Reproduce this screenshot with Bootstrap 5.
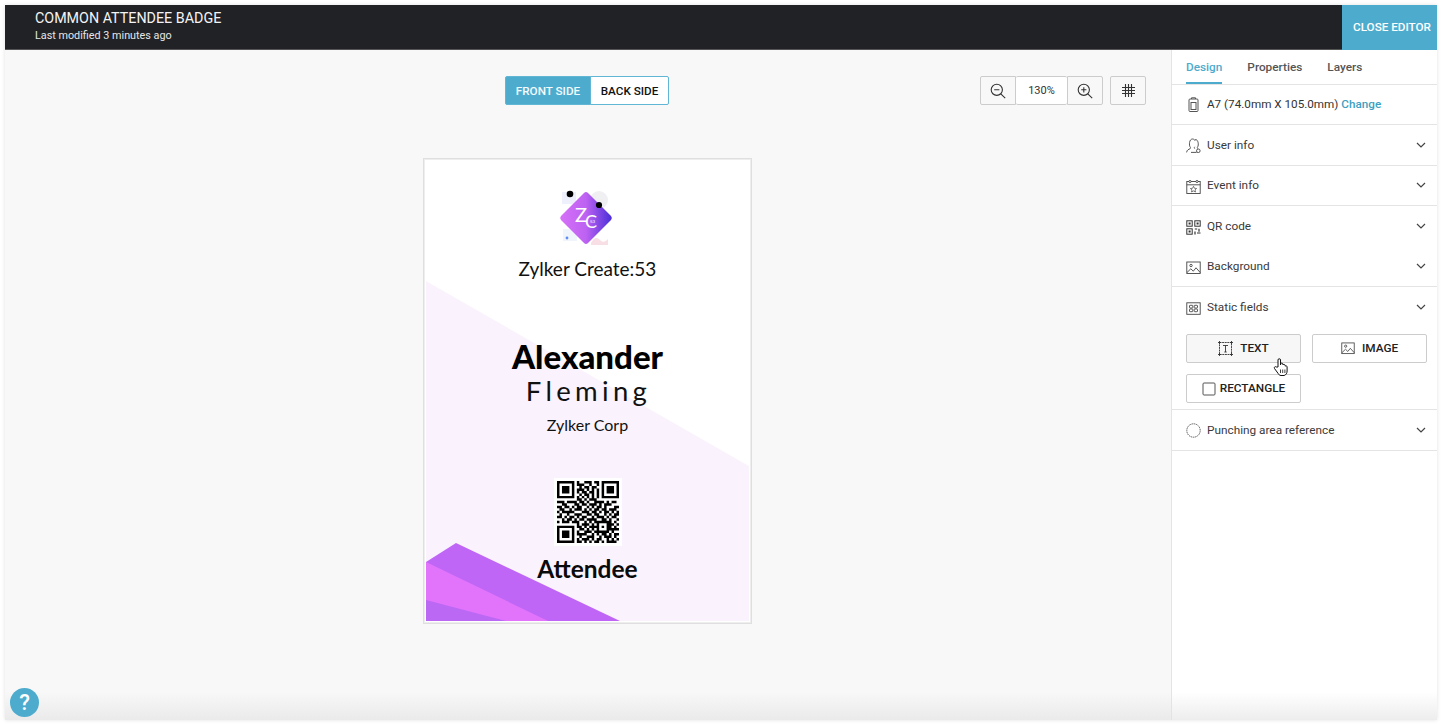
<!DOCTYPE html>
<html>
<head>
  <meta charset="utf-8" />
  <title>Common attendee badge</title>
  <link href="https://cdn.jsdelivr.net/npm/bootstrap@5.3.2/dist/css/bootstrap.min.css" rel="stylesheet">
  <style>
    html, body { height: 100%; overflow: hidden; }
    body { background: #fff; padding: 5px 5px 5px 5px; font-family: Roboto, "Liberation Sans", sans-serif; font-size: 12px; color: #333; }
    .editor-frame { position: relative; height: 715px; display: flex; flex-direction: column; box-shadow: 0 0 4px rgba(0,0,0,.12); overflow: hidden; }
    .top-bar { height: 45px; flex: none; background: #212226; color: #fff; border-bottom: 1px solid #555; }
    .top-title { padding: 4px 0 0 30px; }
    .top-title h1 { font-size: 14.3px; font-weight: 400; margin: 0; line-height: 18px; color: #f4f4f4; }
    .top-title p { font-size: 10.8px; margin: 2px 0 0; line-height: 14px; color: #e6e6e6; }
    .close-editor { width: 95px; height: 45px; border: 0; border-radius: 0; background: #4dabcd; color: #fff; font-size: 11.7px; font-weight: 500; padding: 0 0 0 5px; white-space: nowrap; }
    .work-area { flex: 1; min-height: 0; }
    .canvas-pane { flex: 1; background: #f8f8f8; padding-top: 26px; position: relative; min-width: 0; }
    .canvas-tools { height: 29px; position: relative; }
    .side-toggle { margin-left: 500px; }
    .side-toggle .btn { height: 29px; font-size: 11.7px; font-weight: 500; padding: 2px 0 0; border-color: #62b6d5; border-radius: 2px; }
    .side-toggle .btn-on { width: 86px; background: #4dabcd; color: #f4fbfd; }
    .side-toggle .btn-off { width: 79px; background: #fff; color: #111; }
    .zoom-tools { position: absolute; left: 975px; top: 0; }
    .tool-btn { height: 29px; border: 1px solid #ccc; background: #f8f8f8; padding: 0; display: flex; align-items: center; justify-content: center; border-radius: 2px; }
    .zoom-out { width: 36px; border-radius: 2px 0 0 2px; }
    .zoom-val { width: 51px; border-width: 1px 0; background: #fff; font-size: 11px; color: #333; padding-top: 1px; }
    .zoom-in { width: 36px; border-radius: 0 2px 2px 0; }
    .grid-btn { width: 36px; margin-left: 7px; }
    .id-badge { position: relative; width: 329px; height: 466px; margin: 53px 0 0 418px; background: #fff; border: 1px solid #dfdfdf; outline: 1px solid #eee; outline-offset: -2px; text-align: center; color: #000; font-family: Lato, "Liberation Sans", sans-serif; }
    .badge-art { position: absolute; left: 2px; top: 2px; width: 323px; height: 460px; }
    .badge-flow { position: relative; display: flex; flex-direction: column; align-items: center; }
    .badge-logo { width: 60px; height: 64px; margin: 26px 0 0 -2px; display: block; }
    .event-name { font-size: 19px; line-height: 24px; margin-top: 8px; color: #111; }
    .first-name { font-size: 33px; font-weight: 900; line-height: 36px; margin-top: 57px; }
    .last-name { font-size: 27.5px; line-height: 32px; letter-spacing: 4.3px; margin: 1px 0 0 2px; color: #111; }
    .org-name { font-size: 16px; line-height: 20px; margin-top: 8px; color: #111; }
    .qr-box { width: 68px; height: 68px; margin-top: 43px; background: #fff; padding: 3px; display: block; }
    .role-name { font-size: 24.5px; font-weight: 700; line-height: 30px; margin-top: 8px; color: #0a0a0a; }
    .help-dot { position: absolute; left: 5px; top: 683px; width: 29px; height: 29px; border-radius: 50%; background: #4dabcd; color: #fff; font-size: 22px; font-weight: 500; line-height: 29px; text-align: center; z-index: 3; }
    .bottom-fade { position: absolute; left: 0; right: 0; bottom: 0; height: 28px; background: linear-gradient(to bottom, rgba(225,225,225,0), rgba(225,225,225,.6)); z-index: 2; pointer-events: none; }
    .side-pane { width: 266px; flex: none; background: #fff; border-left: 1px solid #e4e4e4; }
    .side-tabs { height: 35px; border-bottom: 1px solid #e4e4e4; padding-left: 14px; gap: 25px; }
    .side-tabs .nav-link { padding: 9px 0 0; height: 34px; font-size: 11.8px; font-weight: 500; color: #555; border-bottom: 2px solid transparent; }
    .side-tabs .nav-link.active { color: #4dabcd; border-bottom-color: #4dabcd; }
    .size-row { height: 40px; padding-left: 14px; border-bottom: 1px solid #e4e4e4; font-size: 11.7px; color: #333; gap: 6px; }
    .size-row a { color: #3d9fc2; font-weight: 500; text-decoration: none; }
    .prop-row { height: 40.5px; padding: 0 11px 0 14px; gap: 6px; color: #3a3a3a; font-size: 11.8px; }
    .prop-row svg.row-icon { width: 15px; height: 15px; flex: none; margin-top: 2px; }
    .prop-row.punch-row { height: 41px; }
    .row-rule { border-bottom: 1px solid #e4e4e4; }
    .prop-row span { flex: 1; padding-top: 2px; }
    .field-btns { display: grid; grid-template-columns: 115px 115px; column-gap: 11px; row-gap: 11px; padding: 6px 0 6px 14px; border-bottom: 1px solid #e4e4e4; }
    .field-btn { height: 29px; padding: 1px 0 0; font-size: 11.8px; font-weight: 500; color: #222; background: #fff; border: 1px solid #ccc; border-radius: 2px; display: flex; align-items: center; justify-content: center; gap: 7px; }
    .field-btn.is-hover { background: #f7f7f7; position: relative; }
    .hand-cursor { position: absolute; left: 86px; top: 22px; width: 16px; height: 20px; }
  </style>
</head>
<body>
  <div class="editor-frame">
    <!-- top bar -->
    <div class="top-bar d-flex justify-content-between">
      <div class="top-title">
        <h1>COMMON ATTENDEE BADGE</h1>
        <p>Last modified 3 minutes ago</p>
      </div>
      <button class="btn close-editor" type="button">CLOSE EDITOR</button>
    </div>

    <div class="work-area d-flex">
      <!-- canvas -->
      <div class="canvas-pane">
        <div class="canvas-tools">
          <div class="btn-group side-toggle" role="group">
            <button type="button" class="btn btn-on">FRONT SIDE</button>
            <button type="button" class="btn btn-off">BACK SIDE</button>
          </div>
          <div class="zoom-tools d-flex">
            <div class="tool-btn zoom-out">
              <svg width="16" height="16" viewBox="0 0 16 16" fill="none" stroke="#333" stroke-width="1.1"><circle cx="6.8" cy="6.8" r="5.6"/><path d="M4.2 6.8h5.2M10.8 10.8l4.4 4.4"/></svg>
            </div>
            <div class="tool-btn zoom-val">130%</div>
            <div class="tool-btn zoom-in">
              <svg width="16" height="16" viewBox="0 0 16 16" fill="none" stroke="#333" stroke-width="1.1"><circle cx="6.8" cy="6.8" r="5.6"/><path d="M4.2 6.8h5.2M6.8 4.2v5.2M10.8 10.8l4.4 4.4"/></svg>
            </div>
            <div class="tool-btn grid-btn">
              <svg width="15" height="15" viewBox="0 0 15 15" fill="none" stroke="#333" stroke-width="1.1"><path d="M4.5 1v13M7.5 1v13M10.5 1v13M1 4.5h13M1 7.5h13M1 10.5h13"/></svg>
            </div>
          </div>
        </div>

        <!-- badge preview -->
        <div class="id-badge">
          <svg class="badge-art" viewBox="0 0 323 460">
            <polygon points="0,120 323,305 323,460 0,460" fill="#faf3fe"/>
            <polygon points="0,401 30,382 194,460 0,460" fill="#bf66f7"/>
            <polygon points="0,401 122,460 0,460" fill="#e274fb"/>
            <polygon points="0,439 80,460 0,460" fill="#bb68f5"/>
          </svg>
          <div class="badge-flow">
            <svg class="badge-logo" viewBox="0 0 60 64">
              <defs>
                <linearGradient id="logoFill" x1="0" y1="0" x2="1" y2="0">
                  <stop offset="0" stop-color="#d670f7"/>
                  <stop offset=".5" stop-color="#bd62f2"/>
                  <stop offset="1" stop-color="#4a2ed8"/>
                </linearGradient>
              </defs>
              <rect x="5" y="7" width="14" height="12" fill="#eef0fb"/>
              <circle cx="42" cy="15" r="9" fill="#f0f0f3"/>
              <rect x="6" y="44" width="14" height="12" fill="#f0f5fc"/>
              <path d="M34 58c3-6 6-6 9-3s5 2 8-1v6H34z" fill="#f8dfe6"/>
              <path d="M31 8l23 23a3 3 0 0 1 0 4L31 58a3 3 0 0 1-4 0L4 35a3 3 0 0 1 0-4L27 8a3 3 0 0 1 4 0z" fill="url(#logoFill)"/>
              <circle cx="13" cy="9" r="3.3" fill="#000"/>
              <circle cx="42" cy="20" r="3.1" fill="#000"/>
              <circle cx="10" cy="53" r="1.4" fill="#5f8cf5"/>
              <text x="18" y="37" font-family="Lato, sans-serif" font-size="20" fill="#fff">Z</text>
              <text x="28" y="43" font-family="Lato, sans-serif" font-size="18" fill="#fff">C</text>
              <text x="33" y="38" font-family="Lato, sans-serif" font-size="4.500" fill="#fff">53</text>
            </svg>
            <div class="event-name">Zylker Create:53</div>
            <div class="first-name">Alexander</div>
            <div class="last-name">Fleming</div>
            <div class="org-name">Zylker Corp</div>
            <svg class="qr-box" viewBox="0 0 25 25" shape-rendering="geometricPrecision"><path id="qrPath" fill="#000"/></svg>
            <div class="role-name">Attendee</div>
          </div>
        </div>
      </div>

      <!-- right panel -->
      <div class="side-pane">
        <ul class="nav side-tabs">
          <li class="nav-item"><a class="nav-link active" href="#">Design</a></li>
          <li class="nav-item"><a class="nav-link" href="#">Properties</a></li>
          <li class="nav-item"><a class="nav-link" href="#">Layers</a></li>
        </ul>
        <div class="size-row d-flex align-items-center">
          <svg width="15" height="15" viewBox="0 0 14 15" fill="none" stroke="#555" stroke-width="1"><rect x="2.5" y="2" width="9" height="12.5" rx="1"/><rect x="4.5" y="5.5" width="5" height="7"/><path d="M5 2V.8h4V2"/></svg>
          <div>A7 (74.0mm X 105.0mm) <a href="#">Change</a></div>
        </div>

        <div class="prop-row row-rule d-flex align-items-center">
          <svg class="row-icon" viewBox="0 0 15 15" fill="none" stroke="#444" stroke-width=".9"><path d="M.6 14.400c.3-2.600 2.200-3 3.500-3.700.6-.6.500-1.200 0-1.800C3 7.600 3 1 6.500 1c1.300 0 2.200.7 2.600 1.700M9.200 1.500c3.300-.2 3.600 5.800 2.500 7.300-.5.700-.5 1.300.1 1.900M8.700 8.800c-.5.700-.5 1.300.1 1.900M5 14.400h5.600"/><circle cx="12.300" cy="12.800" r="1.800"/></svg>
          <span>User info</span>
          <svg width="10" height="6" viewBox="0 0 10 6" fill="none" stroke="#444" stroke-width="1.200"><path d="M1 1l4 4 4-4"/></svg>
        </div>
        <div class="prop-row row-rule d-flex align-items-center">
          <svg class="row-icon" viewBox="0 0 15 15" fill="none" stroke="#444" stroke-width=".9"><rect x=".8" y="2.500" width="13.400" height="12"/><path d="M.8 5.800h13.400"/><circle cx="4" cy="2.500" r="1.100" fill="#fff"/><circle cx="11" cy="2.500" r="1.100" fill="#fff"/><path d="M7.500 7.300l1 2 2.100.2-1.600 1.400.5 2.100-2-1.100-2 1.100.5-2.100-1.600-1.400 2.100-.2z" stroke-width=".7"/></svg>
          <span>Event info</span>
          <svg width="10" height="6" viewBox="0 0 10 6" fill="none" stroke="#444" stroke-width="1.200"><path d="M1 1l4 4 4-4"/></svg>
        </div>
        <div class="prop-row d-flex align-items-center">
          <svg class="row-icon" viewBox="0 0 15 15" fill="none" stroke="#333" stroke-width="1"><rect x=".8" y=".8" width="5.400" height="5.400"/><rect x="8.800" y=".8" width="5.400" height="5.400"/><rect x=".8" y="8.800" width="5.400" height="5.400"/><path d="M2.600 3.500h2M10.600 3.500h2M2.600 11.500h2" stroke-width="2"/><path d="M8.800 9h2.400M13 8.800v3M9 11.500v3M11 13h3.500" stroke-width="1.200"/></svg>
          <span>QR code</span>
          <svg width="10" height="6" viewBox="0 0 10 6" fill="none" stroke="#444" stroke-width="1.200"><path d="M1 1l4 4 4-4"/></svg>
        </div>
        <div class="prop-row row-rule d-flex align-items-center">
          <svg class="row-icon" viewBox="0 0 15 15" fill="none" stroke="#444" stroke-width=".9"><rect x=".8" y="2" width="13.400" height="11.500"/><circle cx="5" cy="5.500" r="1.200"/><path d="M1 12.500l3.800-3.700 2.500 2.400 2.700-3.400 4.200 4.700"/></svg>
          <span>Background</span>
          <svg width="10" height="6" viewBox="0 0 10 6" fill="none" stroke="#444" stroke-width="1.200"><path d="M1 1l4 4 4-4"/></svg>
        </div>
        <div class="prop-row d-flex align-items-center">
          <svg class="row-icon" viewBox="0 0 15 15" fill="none" stroke="#444" stroke-width=".9"><rect x=".8" y="1.800" width="13.400" height="11.500"/><rect x="3.500" y="4.300" width="3.300" height="2.700" rx=".6"/><rect x="8.200" y="4.300" width="3.300" height="2.700" rx=".6"/><rect x="3.500" y="8" width="3.300" height="2.700" rx=".6"/><rect x="8.200" y="8" width="3.300" height="2.700" rx=".6"/></svg>
          <span>Static fields</span>
          <svg width="10" height="6" viewBox="0 0 10 6" fill="none" stroke="#444" stroke-width="1.200"><path d="M1 1l4 4 4-4"/></svg>
        </div>
        <div class="field-btns">
          <button class="btn field-btn is-hover" type="button">
            <svg width="15" height="15" viewBox="0 0 15 15" fill="none" stroke="#333" stroke-width=".9"><rect x="1.500" y="1.500" width="12" height="12" stroke-dasharray="2 .6"/><path d="M5 4.500h5M7.500 4.500v6.500M6.300 11h2.400"/><path d="M0 1.500h3M1.500 0v3M12 1.500h3M13.500 0v3M0 13.500h3M1.500 12v3M12 13.500h3M13.500 12v3"/></svg>
            TEXT
            <svg class="hand-cursor" viewBox="0 0 16 20"><path d="M5 10V3a1.200 1.200 0 0 1 2.500 0v5l.2-1.200c.3-1 2-1 2.200.2l.1 1c.3-.9 1.900-.8 2.100.3l.1.900c.4-.7 1.800-.5 1.900.6v4.200c0 2-1 4-3 4.500H8c-1.500 0-2.300-1-3-2.200L1.500 11.500c-.8-1.200.8-2.500 1.800-1.500z" fill="#fff" stroke="#111" stroke-width="1"/><path d="M7.500 12.500v3.500M9.700 12.500v3.500M11.900 12.500v3.500" stroke="#111" stroke-width=".8"/></svg>
          </button>
          <button class="btn field-btn" type="button">
            <svg width="14" height="13" viewBox="0 0 15 14" fill="none" stroke="#444" stroke-width=".9"><rect x=".8" y="1" width="13.400" height="11.500"/><circle cx="5" cy="4.500" r="1.200"/><path d="M1 11.500l3.800-3.700 2.500 2.400 2.700-3.400 4.200 4.700"/></svg>
            IMAGE
          </button>
          <button class="btn field-btn gap-1" type="button">
            <svg width="14" height="14" viewBox="0 0 14 14" fill="none" stroke="#555" stroke-width="1"><rect x="1" y="1" width="12" height="12" rx="1"/></svg>
            RECTANGLE
          </button>
        </div>
        <div class="prop-row punch-row row-rule d-flex align-items-center">
          <svg class="row-icon" viewBox="0 0 15 15" fill="none" stroke="#444" stroke-width=".9" stroke-dasharray="1.300 .7"><circle cx="7.500" cy="7.500" r="6.700"/></svg>
          <span>Punching area reference</span>
          <svg width="10" height="6" viewBox="0 0 10 6" fill="none" stroke="#444" stroke-width="1.200"><path d="M1 1l4 4 4-4"/></svg>
        </div>
      </div>
    </div>

    <div class="bottom-fade"></div>
    <div class="help-dot">?</div>
  </div>

  <script>
    // QR modules, one string per row
    const qrRows = [
      '1111111010011101101111111',
      '1000001011100100101000001',
      '1011101001011011001011101',
      '1011101011101010101011101',
      '1011101010110110101011101',
      '1000001001011010101000001',
      '1111111010101010101111111',
      '0000000011010111000000000',
      '1110111101101001111010110',
      '0011000110110111010111000',
      '1101101011001010110100011',
      '0110010111010101101101110',
      '1011111000111011010110101',
      '0100100111001101100101011',
      '1101011010110010111010110',
      '0010110101101111001101001',
      '1011101110010101111111010',
      '0000000010111010100011101',
      '1111111011010111101011010',
      '1000001001101010100011111',
      '1011101010011101111110100',
      '1011101011110010101101011',
      '1011101001001110010111010',
      '1000001010111010110010101',
      '1111111011010101101011110'
    ]
    let d = ''
    qrRows.forEach((row, y) => {
      [...row].forEach((c, x) => { if (c === '1') d += 'M' + x + ' ' + y + 'h1v1h-1z' })
    })
    document.getElementById('qrPath').setAttribute('d', d)
  </script>
  <script src="https://cdn.jsdelivr.net/npm/bootstrap@5.3.2/dist/js/bootstrap.bundle.min.js"></script>
</body>
</html>
